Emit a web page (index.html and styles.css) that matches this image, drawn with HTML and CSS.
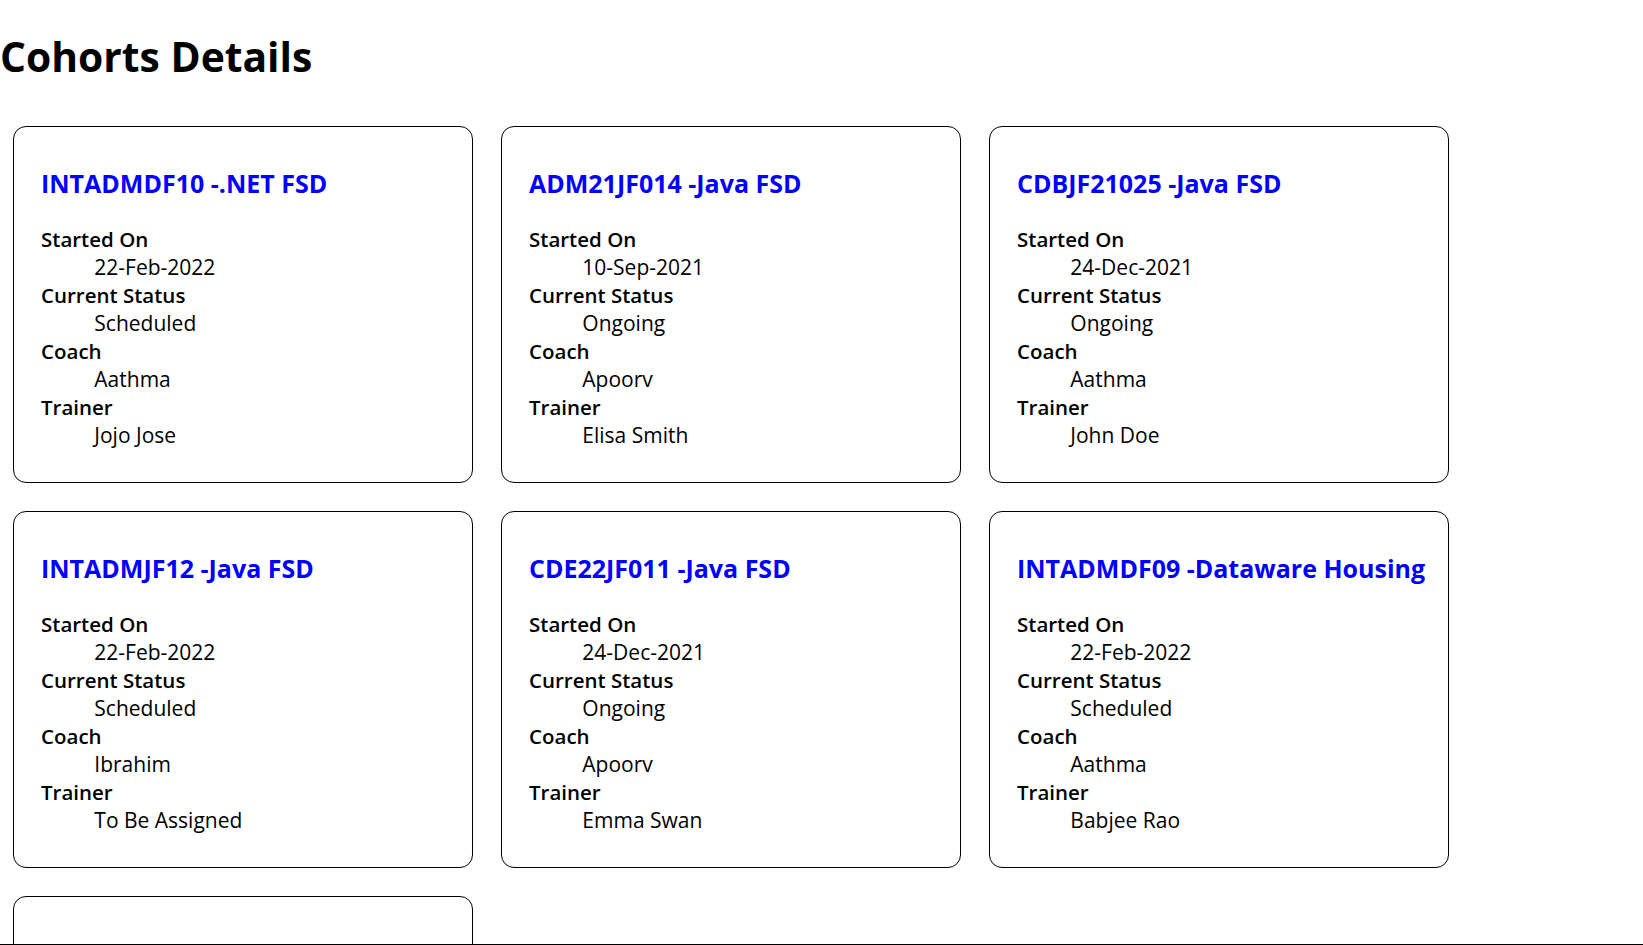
FILE: index.html
```html
<!DOCTYPE html>
<html lang="en">
<head>
<meta charset="utf-8">
<title>Cohorts Details</title>
<link rel="stylesheet" href="styles.css">
</head>
<body>
<h1 class="page-title">Cohorts Details</h1>
<div class="cohorts">
  <div class="cohort-card">
    <h3 class="cohort-name">INTADMDF10 -.NET FSD</h3>
    <dl class="cohort-info">
      <dt>Started On</dt><dd>22-Feb-2022</dd>
      <dt>Current Status</dt><dd>Scheduled</dd>
      <dt>Coach</dt><dd>Aathma</dd>
      <dt>Trainer</dt><dd>Jojo Jose</dd>
    </dl>
  </div>
  <div class="cohort-card">
    <h3 class="cohort-name">ADM21JF014 -Java FSD</h3>
    <dl class="cohort-info">
      <dt>Started On</dt><dd>10-Sep-2021</dd>
      <dt>Current Status</dt><dd>Ongoing</dd>
      <dt>Coach</dt><dd>Apoorv</dd>
      <dt>Trainer</dt><dd>Elisa Smith</dd>
    </dl>
  </div>
  <div class="cohort-card">
    <h3 class="cohort-name">CDBJF21025 -Java FSD</h3>
    <dl class="cohort-info">
      <dt>Started On</dt><dd>24-Dec-2021</dd>
      <dt>Current Status</dt><dd>Ongoing</dd>
      <dt>Coach</dt><dd>Aathma</dd>
      <dt>Trainer</dt><dd>John Doe</dd>
    </dl>
  </div>
  <div class="cohort-card">
    <h3 class="cohort-name">INTADMJF12 -Java FSD</h3>
    <dl class="cohort-info">
      <dt>Started On</dt><dd>22-Feb-2022</dd>
      <dt>Current Status</dt><dd>Scheduled</dd>
      <dt>Coach</dt><dd>Ibrahim</dd>
      <dt>Trainer</dt><dd>To Be Assigned</dd>
    </dl>
  </div>
  <div class="cohort-card">
    <h3 class="cohort-name">CDE22JF011 -Java FSD</h3>
    <dl class="cohort-info">
      <dt>Started On</dt><dd>24-Dec-2021</dd>
      <dt>Current Status</dt><dd>Ongoing</dd>
      <dt>Coach</dt><dd>Apoorv</dd>
      <dt>Trainer</dt><dd>Emma Swan</dd>
    </dl>
  </div>
  <div class="cohort-card">
    <h3 class="cohort-name">INTADMDF09 -Dataware Housing</h3>
    <dl class="cohort-info">
      <dt>Started On</dt><dd>22-Feb-2022</dd>
      <dt>Current Status</dt><dd>Scheduled</dd>
      <dt>Coach</dt><dd>Aathma</dd>
      <dt>Trainer</dt><dd>Babjee Rao</dd>
    </dl>
  </div>
  <div class="cohort-card">
    <h3 class="cohort-name">ADM21JF016 -Java FSD</h3>
    <dl class="cohort-info">
      <dt>Started On</dt><dd>10-Sep-2021</dd>
      <dt>Current Status</dt><dd>Ongoing</dd>
      <dt>Coach</dt><dd>Ibrahim</dd>
      <dt>Trainer</dt><dd>Elisa Smith</dd>
    </dl>
  </div>
</div>
<div class="bottom-rule"></div>
</body>
</html>
```
FILE: styles.css
```css
html, body {
  margin: 0;
  padding: 0;
  background: #ffffff;
}

body {
  font-family: "Open Sans", "Noto Sans", sans-serif;
  font-size: 21.33px;
  line-height: 28px;
  color: #000000;
}

.page-title {
  margin: 28px 0 28.5px 0;
  font-size: 40.8px;
  line-height: 57px;
  font-weight: 700;
}

.cohorts {
  display: grid;
  grid-template-columns: repeat(3, 460px);
  column-gap: 28px;
  row-gap: 28px;
  padding: 12px 13px;
}

.cohort-card {
  box-sizing: border-box;
  width: 460px;
  border: 1px solid #000000;
  border-radius: 13px;
  padding: 15.5px 27px 13.33px 27px;
}

.cohort-name {
  margin: 25px 0;
  font-size: 25px;
  line-height: 33px;
  font-weight: 700;
  color: #0000ff;
  white-space: nowrap;
}

.cohort-info {
  margin: 0 0 19.5px 0;
}

.cohort-info dt {
  font-weight: 600;
  font-size: 20.5px;
}

.cohort-info dd {
  margin: 0 0 0 53.33px;
  font-size: 21px;
}

.bottom-rule {
  position: fixed;
  left: 0;
  right: 0;
  bottom: 0;
  height: 1px;
  background: #000000;
}
```
